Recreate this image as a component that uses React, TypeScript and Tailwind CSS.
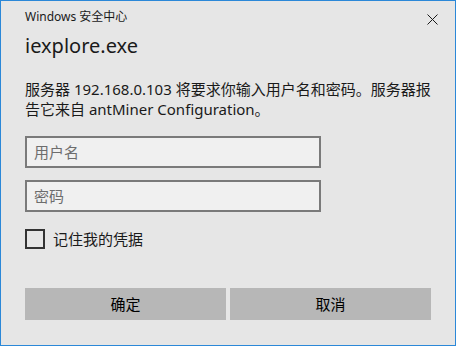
export default function App() {
  const font = { fontFamily: '"Segoe UI", "Noto Sans", "Noto Sans CJK SC", sans-serif' };
  return (
    <div
      className="w-[456px] h-[346px] bg-[#e6e6e6] border border-[#2b88d8] flex flex-col text-[#000] overflow-hidden"
      style={font}
    >
      <div className="flex items-start justify-between pl-6 pr-[8px] pt-[7px] h-[32px]">
        <span className="text-[12px] leading-[18px] text-[#1a1a1a]">Windows 安全中心</span>
        <button className="w-[30px] h-[20px] flex items-center justify-center mt-[1px]">
          <svg width="11" height="11" viewBox="0 0 11 11">
            <path d="M0.5 0.5 L10.5 10.5 M10.5 0.5 L0.5 10.5" stroke="#1a1a1a" strokeWidth="1" />
          </svg>
        </button>
      </div>
      <div className="px-6">
        <div className="text-[20px] leading-[26px] text-[#1a1a1a]">iexplore.exe</div>
        <p className="mt-[20px] text-[15px] leading-[20px] text-[#1a1a1a]">
          服务器 192.168.0.103 将要求你输入用户名和密码。服务器报告它来自 antMiner Configuration。
        </p>
        <div className="mt-[17px] flex flex-col gap-[12px]">
          <input
            placeholder="用户名"
            className="w-[296px] h-[32px] border-2 border-[#7a7a7a] bg-[#f0f0f0] px-[7px] text-[15px] placeholder:text-[#6d6d6d] outline-none"
          />
          <input
            placeholder="密码"
            type="text"
            className="w-[296px] h-[32px] border-2 border-[#7a7a7a] bg-[#f0f0f0] px-[7px] text-[15px] placeholder:text-[#6d6d6d] outline-none"
          />
        </div>
        <label className="mt-[17px] flex items-center gap-[8px]">
          <span className="w-[20px] h-[20px] border-2 border-[#333333]" />
          <span className="text-[15px] leading-[20px] text-[#1a1a1a]">记住我的凭据</span>
        </label>
        <div className="mt-[39px] flex gap-[4px]">
          <button className="w-[201px] h-[32px] bg-[#b7b7b7] text-[15px] text-[#000]">确定</button>
          <button className="w-[201px] h-[32px] bg-[#b7b7b7] text-[15px] text-[#000]">取消</button>
        </div>
      </div>
    </div>
  );
}
